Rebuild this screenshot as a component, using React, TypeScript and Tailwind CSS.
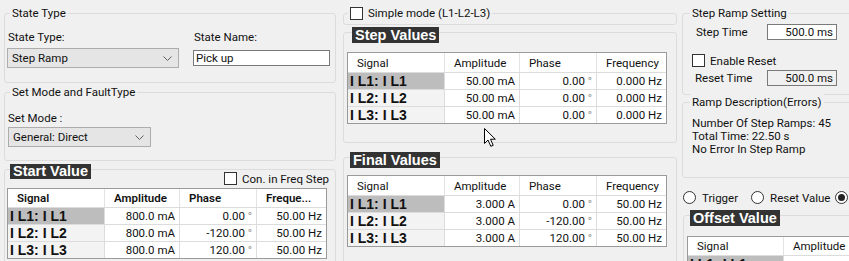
import React from "react";

type Row = { label: string; vals: string[] };

const boldFont = "font-['Liberation_Sans',Arial,sans-serif] font-bold";

function Deg({ v }: { v: string }) {
  if (!v.endsWith("°")) return <span>{v}</span>;
  return (
    <span className="whitespace-pre">
      {v.slice(0, -1)}
      <span className="text-[#8a8a8a]">°</span>
    </span>
  );
}

function Checkbox() {
  return <span className="block h-[13px] w-[13px] shrink-0 border border-[#333] bg-white" />;
}

function Radio({ on }: { on?: boolean }) {
  return (
    <span className="flex h-[13px] w-[13px] shrink-0 items-center justify-center rounded-full border border-[#333] bg-white">
      {on && <span className="h-[7px] w-[7px] rounded-full bg-[#222]" />}
    </span>
  );
}

function Chevron() {
  return (
    <svg width="9" height="5" viewBox="0 0 9 5" className="shrink-0">
      <path d="M0.5 0.5 L4.5 4.5 L8.5 0.5" fill="none" stroke="#606060" strokeWidth="1" />
    </svg>
  );
}

function Combo({ text, w }: { text: string; w: string }) {
  return (
    <div className={`flex h-[20px] items-center justify-between border border-[#adadad] bg-[#e5e5e5] pl-[4px] pr-[6px] ${w}`}>
      <span>{text}</span>
      <Chevron />
    </div>
  );
}

// plain group title sitting on the top border
function Caption({ text, ml = "ml-[5px]" }: { text: string; ml?: string }) {
  return <div className={`-mt-[9px] h-[16px] w-fit bg-[#f0f0f0] px-[2px] ${ml}`}>{text}</div>;
}

// dark title block sitting on the top border
function DarkCaption({ text, ml, h = "h-[16px] leading-[16px]" }: { text: string; ml: string; h?: string }) {
  return (
    <div className={`-mt-[6px] w-fit bg-[#333] px-[3px] text-[14.5px] text-white ${h} ${boldFont} ${ml}`}>
      {text}
    </div>
  );
}

function Table({
  cols,
  header,
  rows,
  headH,
  headBold,
  width,
}: {
  cols: string;
  header: string[];
  rows: Row[];
  headH: string;
  headBold?: boolean;
  width: string;
}) {
  return (
    <div className={`border border-[#9a9a9a] bg-white ${width}`}>
      <div className={`grid ${cols} ${headH}`}>
        {header.map((h, i) => (
          <div
            key={h}
            className={`flex items-center overflow-hidden whitespace-nowrap pl-[9px] ${headBold ? "font-semibold" : ""} ${
              i < header.length - 1 ? "border-r border-[#e3e3e3]" : ""
            }`}
          >
            {h}
          </div>
        ))}
      </div>
      {rows.map((r, ri) => (
        <div key={r.label} className={`grid h-[17px] border-t border-[#dcdcdc] ${cols}`}>
          <div
            className={`flex items-center overflow-hidden whitespace-nowrap border-r border-[#dcdcdc] pl-[2px] text-[14px] ${boldFont} ${
              ri === 0 ? "bg-[#bdbdbd]" : "bg-[#f3f3f3]"
            }`}
          >
            {r.label}
          </div>
          {r.vals.map((v, vi) => (
            <div
              key={vi}
              className={`flex items-center justify-end overflow-hidden whitespace-nowrap pr-[4px] ${
                vi < r.vals.length - 1 ? "border-r border-[#dcdcdc]" : ""
              }`}
            >
              <Deg v={v} />
            </div>
          ))}
        </div>
      ))}
    </div>
  );
}

const labels = ["I L1: I L1", "I L2: I L2", "I L3: I L3"];
const phases = ["0.00 °", "-120.00 °", "120.00 °"];

const startRows: Row[] = labels.map((l, i) => ({ label: l, vals: ["800.0 mA", phases[i], "50.00 Hz"] }));
const stepRows: Row[] = labels.map((l) => ({ label: l, vals: ["50.00 mA", "0.00 °", "0.000 Hz"] }));
const finalRows: Row[] = labels.map((l, i) => ({ label: l, vals: ["3.000 A", phases[i], "50.00 Hz"] }));

const fourCols = "grid-cols-[97px_75px_77px_69px]";
const group = "rounded-[3px] border border-[#dcdcdc] shrink-0";

export default function App() {
  return (
    <div className="relative flex h-[261px] w-[849px] overflow-hidden bg-[#f0f0f0] font-['Roboto',sans-serif] text-[11.5px] leading-[16px] text-[#111]">
      {/* left column */}
      <div className="flex w-[340px] shrink-0 flex-col pl-[4px]">
        <div className={`mt-[13px] h-[70px] w-[332px] ${group}`}>
          <Caption text="State Type" />
          <div className="flex pl-[2px]">
            <div className="flex w-[172px] flex-col">
              <span className="mt-[8px] h-[16px] pl-[1px]">State Type:</span>
              <div className="mt-[3px]">
                <Combo text="Step Ramp" w="w-[172px]" />
              </div>
            </div>
            <div className="ml-[14px] flex flex-col">
              <span className="mt-[8px] h-[16px] pl-[1px]">State Name:</span>
              <div className="mt-[5px] flex h-[16px] w-[137px] items-center border border-[#7a7a7a] bg-white pl-[2px]">
                Pick up
              </div>
            </div>
          </div>
        </div>

        <div className={`mt-[9px] h-[69px] w-[332px] ${group}`}>
          <Caption text="Set Mode and FaultType" />
          <div className="flex flex-col pl-[3px]">
            <span className="mt-[10px] h-[16px]">Set Mode :</span>
            <div className="mt-[1px]">
              <Combo text="General: Direct" w="w-[143px]" />
            </div>
          </div>
        </div>

        <div className={`mt-[8px] h-[120px] w-[332px] ${group}`}>
          <DarkCaption text="Start Value" ml="ml-[5px]" h="h-[15px] leading-[15px]" />
          <div className="-mt-[7px] flex h-[13px] items-center justify-end gap-[5px] pr-[6px]">
            <Checkbox />
            <span>Con. in Freq Step</span>
          </div>
          <div className="mt-[3px] pl-[2px]">
            <Table
              cols={fourCols}
              header={["Signal", "Amplitude", "Phase", "Freque..."]}
              rows={startRows}
              headH="h-[18px]"
              headBold
              width="w-[320px]"
            />
          </div>
        </div>
      </div>

      {/* middle column */}
      <div className="flex w-[340px] shrink-0 flex-col pl-[3px]">
        <div className={`mt-[13px] h-[12px] w-[334px] ${group}`}>
          <div className="-mt-[9px] ml-[4px] flex h-[16px] w-fit items-center gap-[5px] bg-[#f0f0f0] px-[2px]">
            <Checkbox />
            <span>Simple mode (L1-L2-L3)</span>
          </div>
        </div>

        <div className={`mt-[7px] h-[111px] w-[334px] ${group}`}>
          <DarkCaption text="Step Values" ml="ml-[8px]" />
          <div className="mt-[9px] pl-[3px]">
            <Table
              cols={fourCols}
              header={["Signal", "Amplitude", "Phase", "Frequency"]}
              rows={stepRows}
              headH="h-[19px]"
              width="w-[320px]"
            />
          </div>
        </div>

        <div className={`mt-[14px] h-[120px] w-[334px] ${group}`}>
          <DarkCaption text="Final Values" ml="ml-[6px]" />
          <div className="mt-[7px] pl-[3px]">
            <Table
              cols={fourCols}
              header={["Signal", "Amplitude", "Phase", "Frequency"]}
              rows={finalRows}
              headH="h-[19px]"
              width="w-[320px]"
            />
          </div>
        </div>
      </div>

      {/* right column */}
      <div className="flex w-[200px] shrink-0 flex-col pl-[2px]">
        <div className={`mt-[13px] h-[82px] w-[190px] ${group}`}>
          <Caption text="Step Ramp Setting" ml="ml-[7px]" />
          <div className="mt-[3px] flex h-[16px] items-center pl-[13px]">
            <span className="w-[71px]">Step Time</span>
            <div className="flex h-[16px] w-[70px] items-center justify-end border border-[#7a7a7a] bg-white pr-[3px]">
              500.0 ms
            </div>
          </div>
          <div className="mt-[14px] flex h-[13px] items-center gap-[5px] pl-[9px]">
            <Checkbox />
            <span>Enable Reset</span>
          </div>
          <div className="mt-[3px] flex h-[16px] items-center pl-[12px]">
            <span className="w-[72px]">Reset Time</span>
            <div className="flex h-[16px] w-[70px] items-center justify-end border border-[#7a7a7a] bg-[#f0f0f0] pr-[3px]">
              500.0 ms
            </div>
          </div>
        </div>

        <div className={`mt-[7px] h-[76px] w-[190px] ${group}`}>
          <Caption text="Ramp Description(Errors)" ml="ml-[7px]" />
          <div className="mt-[7px] flex flex-col pl-[9px] leading-[13px]">
            <span>Number Of Step Ramps: 45</span>
            <span>Total Time: 22.50 s</span>
            <span>No Error In Step Ramp</span>
          </div>
        </div>

        <div className="mt-[13px] flex h-[13px] shrink-0 items-center whitespace-nowrap pl-[1px]">
          <Radio />
          <span className="ml-[6px]">Trigger</span>
          <span className="ml-[13px]">
            <Radio />
          </span>
          <span className="ml-[6px]">Reset Value</span>
          <span className="ml-[5px]">
            <Radio on />
          </span>
        </div>

        <div className={`ml-[1px] mt-[11px] h-[60px] w-[190px] ${group}`}>
          <DarkCaption text="Offset Value" ml="ml-[6px]" />
          <div className="mt-[10px] pl-[3px]">
            <Table
              cols="grid-cols-[96px_100px]"
              header={["Signal", "Amplitude"]}
              rows={[{ label: "I L1: I L1", vals: ["0.000"] }]}
              headH="h-[18px]"
              width="w-[200px]"
            />
          </div>
        </div>
      </div>

      {/* mouse pointer */}
      <svg className="absolute left-[484px] top-[128px]" width="13" height="20" viewBox="0 0 13 20">
        <path
          d="M0.5 0.5 L0.5 15.5 L4 12 L6.8 18.3 L9.2 17.3 L6.5 11.2 L11.3 11.2 Z"
          fill="#fff"
          stroke="#000"
          strokeWidth="1"
          strokeLinejoin="round"
        />
      </svg>
    </div>
  );
}
